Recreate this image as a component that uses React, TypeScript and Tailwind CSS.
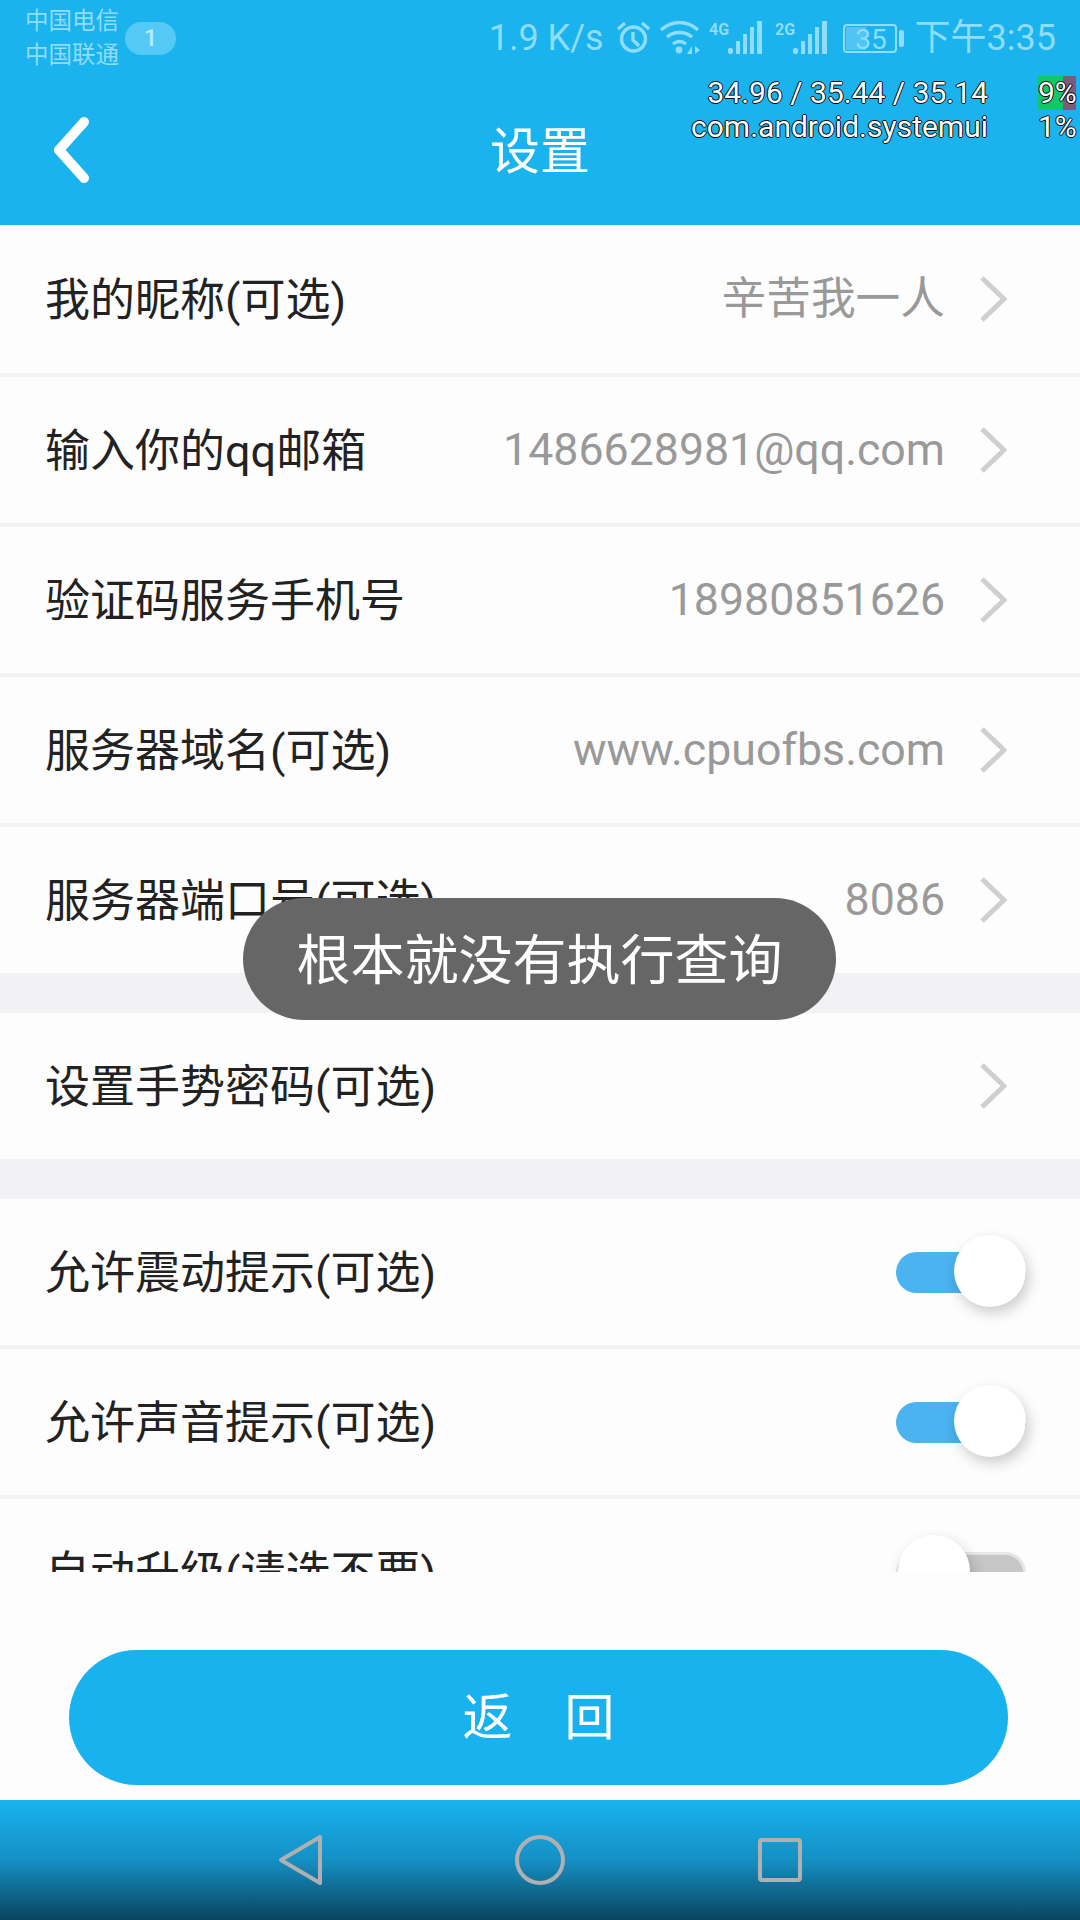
const FONT = "[font-family:Roboto,'Noto_Sans_CJK_SC',sans-serif]";

const topRows = [
  { label: "我的昵称(可选)", value: "辛苦我一人", height: "h-[148px]" },
  { label: "输入你的qq邮箱", value: "1486628981@qq.com", height: "h-[146px]" },
  { label: "验证码服务手机号", value: "18980851626", height: "h-[146px]" },
  { label: "服务器域名(可选)", value: "www.cpuofbs.com", height: "h-[146px]" },
];

function Divider() {
  return <div className="h-[4px] bg-[#f2f2f5]" />;
}

function Band({ height }: { height: string }) {
  return <div className={`${height} bg-[#f2f2f5]`} />;
}

function Chevron() {
  return (
    <svg width="28" height="48" viewBox="0 0 28 48" className="blur-[0.6px]">
      <path d="M3 3 25 24 3 45" fill="none" stroke="#cfcfcf" strokeWidth="5" />
    </svg>
  );
}

function LinkRow({ label, value, height }: { label: string; value?: string; height: string }) {
  return (
    <div className={`${height} flex items-center justify-between bg-[#fdfdfd] pl-[45px] pr-[73px]`}>
      <span className="pt-[3px] text-[45px] leading-none text-[#222]">{label}</span>
      <div className="flex items-center gap-[34px]">
        {value && <span className="pt-[1px] text-[44.7px] leading-none text-[#999]">{value}</span>}
        <Chevron />
      </div>
    </div>
  );
}

function Toggle({ on }: { on: boolean }) {
  return (
    <div className="relative h-[41px] w-[130px]">
      <div
        className={`h-full w-full rounded-full ${
          on ? "bg-[#4ab3f0]" : "border-[3px] border-[#e6e6e6] bg-[#c6c6c6]"
        }`}
      />
      <div
        className={`absolute top-[-17px] h-[72px] w-[72px] rounded-full bg-white shadow-[3px_6px_14px_rgba(0,0,0,0.2)] ${
          on ? "right-0" : "left-[2px]"
        }`}
      />
    </div>
  );
}

function ToggleRow({ label, on, height }: { label: string; on: boolean; height: string }) {
  return (
    <div className={`${height} flex items-center justify-between bg-[#fdfdfd] pl-[45px] pr-[54px]`}>
      <span className="pt-[2px] text-[45px] leading-none text-[#222]">{label}</span>
      <Toggle on={on} />
    </div>
  );
}

function StatusIcons() {
  return (
    <svg width="300" height="40" viewBox="0 0 300 40" className="text-[#8fdcfb]" fill="currentColor">
      {/* alarm */}
      <g fill="none" stroke="currentColor" strokeWidth="3.4">
        <circle cx="24.5" cy="21" r="12" />
        <path d="M24 14v8l6 6" />
        <path d="M9 11l7-6M40 11l-7-6" />
      </g>
      {/* wifi */}
      <g fill="none" stroke="currentColor" strokeWidth="3.4">
        <path d="M52 12c11-10 26-10 37 0" />
        <path d="M58 19c7-6 18-6 25 0" />
        <path d="M64 26c4-3 9-3 13 0" />
      </g>
      <circle cx="70" cy="32" r="3.4" />
      <path d="M78 36l5-8v8zM86 28l5 4-5 4z" />
      {/* sim 1 */}
      <text x="100" y="17" fontSize="16" fontWeight="700" fontFamily="Roboto, sans-serif">4G</text>
      <rect x="119" y="30" width="5" height="6" rx="2" />
      <rect x="127" y="23" width="4" height="13" />
      <rect x="134" y="16" width="4" height="20" />
      <rect x="141" y="9" width="4" height="27" />
      <rect x="148" y="3" width="5" height="33" />
      {/* sim 2 */}
      <text x="166" y="17" fontSize="16" fontWeight="700" fontFamily="Roboto, sans-serif">2G</text>
      <rect x="184" y="30" width="5" height="6" rx="2" />
      <rect x="192" y="23" width="4" height="13" />
      <rect x="199" y="16" width="4" height="20" />
      <rect x="206" y="9" width="4" height="27" />
      <rect x="213" y="3" width="5" height="33" />
      {/* battery */}
      <rect x="235" y="7" width="52" height="27" rx="3" fill="none" stroke="currentColor" strokeWidth="2" />
      <rect x="237" y="9" width="20" height="23" opacity="0.45" />
      <rect x="290" y="12" width="5" height="17" rx="2" />
      <text x="262" y="31" textAnchor="middle" fontSize="28" fontFamily="Roboto, sans-serif">35</text>
    </svg>
  );
}

export default function App() {
  return (
    <div className={`relative flex h-[1920px] w-[1080px] flex-col overflow-hidden bg-[#fdfdfd] ${FONT}`}>
      {/* header + status bar */}
      <header className="relative h-[225px] shrink-0 bg-[#1ab3ee]">
        <div className="flex h-[74px] items-center pl-[25px] pr-[24px] pt-[2px] text-[#8fdcfb]">
          <div className="flex flex-col text-[23.5px] leading-[34px]">
            <span>中国电信</span>
            <span>中国联通</span>
          </div>
          <span className="ml-[6px] flex h-[33px] w-[51px] items-center justify-center rounded-full bg-[#55c9f6] text-[24px] font-medium text-[#b7ecfd]">
            1
          </span>
          <span className="ml-auto text-[36px] leading-none">1.9 K/s</span>
          <div className="ml-[5px]">
            <StatusIcons />
          </div>
          <span className="ml-[6px] text-[36px] leading-none">下午3:35</span>
        </div>
        <div className="relative flex h-[150px] items-center justify-center">
          <svg width="44" height="70" viewBox="0 0 44 70" className="absolute left-[50px] top-[41px]">
            <path d="M34 7 9 35l25 28" fill="none" stroke="white" strokeWidth="10" strokeLinecap="round" strokeLinejoin="round" />
          </svg>
          <span className="pt-[5px] text-[50px] leading-none text-white">设置</span>
        </div>
        {/* cpu overlay */}
        <div className="absolute right-[4px] top-[76px] text-[30px] leading-[34px] text-white [text-shadow:-1px_0_#000,1px_0_#000,0_-1px_#000,0_1px_#000]">
          <div className="flex h-[34px] items-center justify-end">
            <span>34.96 / 35.44 / 35.14</span>
            <span className="ml-[50px] w-[38px] bg-[linear-gradient(90deg,#10c86c_0,#10c86c_65%,#7d5a80_65%)] text-right">9%</span>
          </div>
          <div className="flex h-[34px] items-center justify-end">
            <span>com.android.systemui</span>
            <span className="ml-[50px] w-[38px] text-right">1%</span>
          </div>
        </div>
      </header>

      {/* settings list, clipped by the button area */}
      <div className="h-[1347px] shrink-0 overflow-hidden">
        {topRows.map((row) => (
          <div key={row.label}>
            <LinkRow {...row} />
            <Divider />
          </div>
        ))}
        <LinkRow label="服务器端口号(可选)" value="8086" height="h-[146px]" />
        <Band height="h-[40px]" />
        <LinkRow label="设置手势密码(可选)" height="h-[146px]" />
        <Band height="h-[40px]" />
        <ToggleRow label="允许震动提示(可选)" on height="h-[146px]" />
        <Divider />
        <ToggleRow label="允许声音提示(可选)" on height="h-[146px]" />
        <Divider />
        <ToggleRow label="自动升级(请选不要)" on={false} height="h-[146px]" />
      </div>

      {/* back button */}
      <div className="flex flex-1 items-start bg-[#fdfdfd] pl-[69px] pr-[72px] pt-[78px]">
        <button className="flex h-[135px] w-full items-center justify-center rounded-[68px] bg-[#18b3ef] text-[50px] leading-none text-white">
          返<span className="ml-[52px]">回</span>
        </button>
      </div>

      {/* nav bar */}
      <nav className="flex h-[120px] shrink-0 items-center justify-center gap-[190px] bg-gradient-to-b from-[#18b3ef] via-[#1590c4] to-[#0a4560]">
        <svg width="50" height="50" viewBox="0 0 50 50" fill="none" stroke="#b0b0b0" strokeWidth="4" strokeLinejoin="round">
          <path d="M45 2 6 25l39 23z" />
        </svg>
        <svg width="50" height="50" viewBox="0 0 50 50" fill="none" stroke="#b0b0b0" strokeWidth="4">
          <circle cx="25" cy="25" r="23" />
        </svg>
        <svg width="50" height="50" viewBox="0 0 50 50" fill="none" stroke="#b0b0b0" strokeWidth="4" strokeLinejoin="round">
          <rect x="5" y="5" width="40" height="40" rx="2" />
        </svg>
      </nav>

      {/* toast */}
      <div className="absolute left-[243px] top-[898px] flex h-[122px] w-[593px] items-center justify-center rounded-[61px] bg-[#666] pt-[5px] text-[54px] leading-none text-white">
        根本就没有执行查询
      </div>
    </div>
  );
}
